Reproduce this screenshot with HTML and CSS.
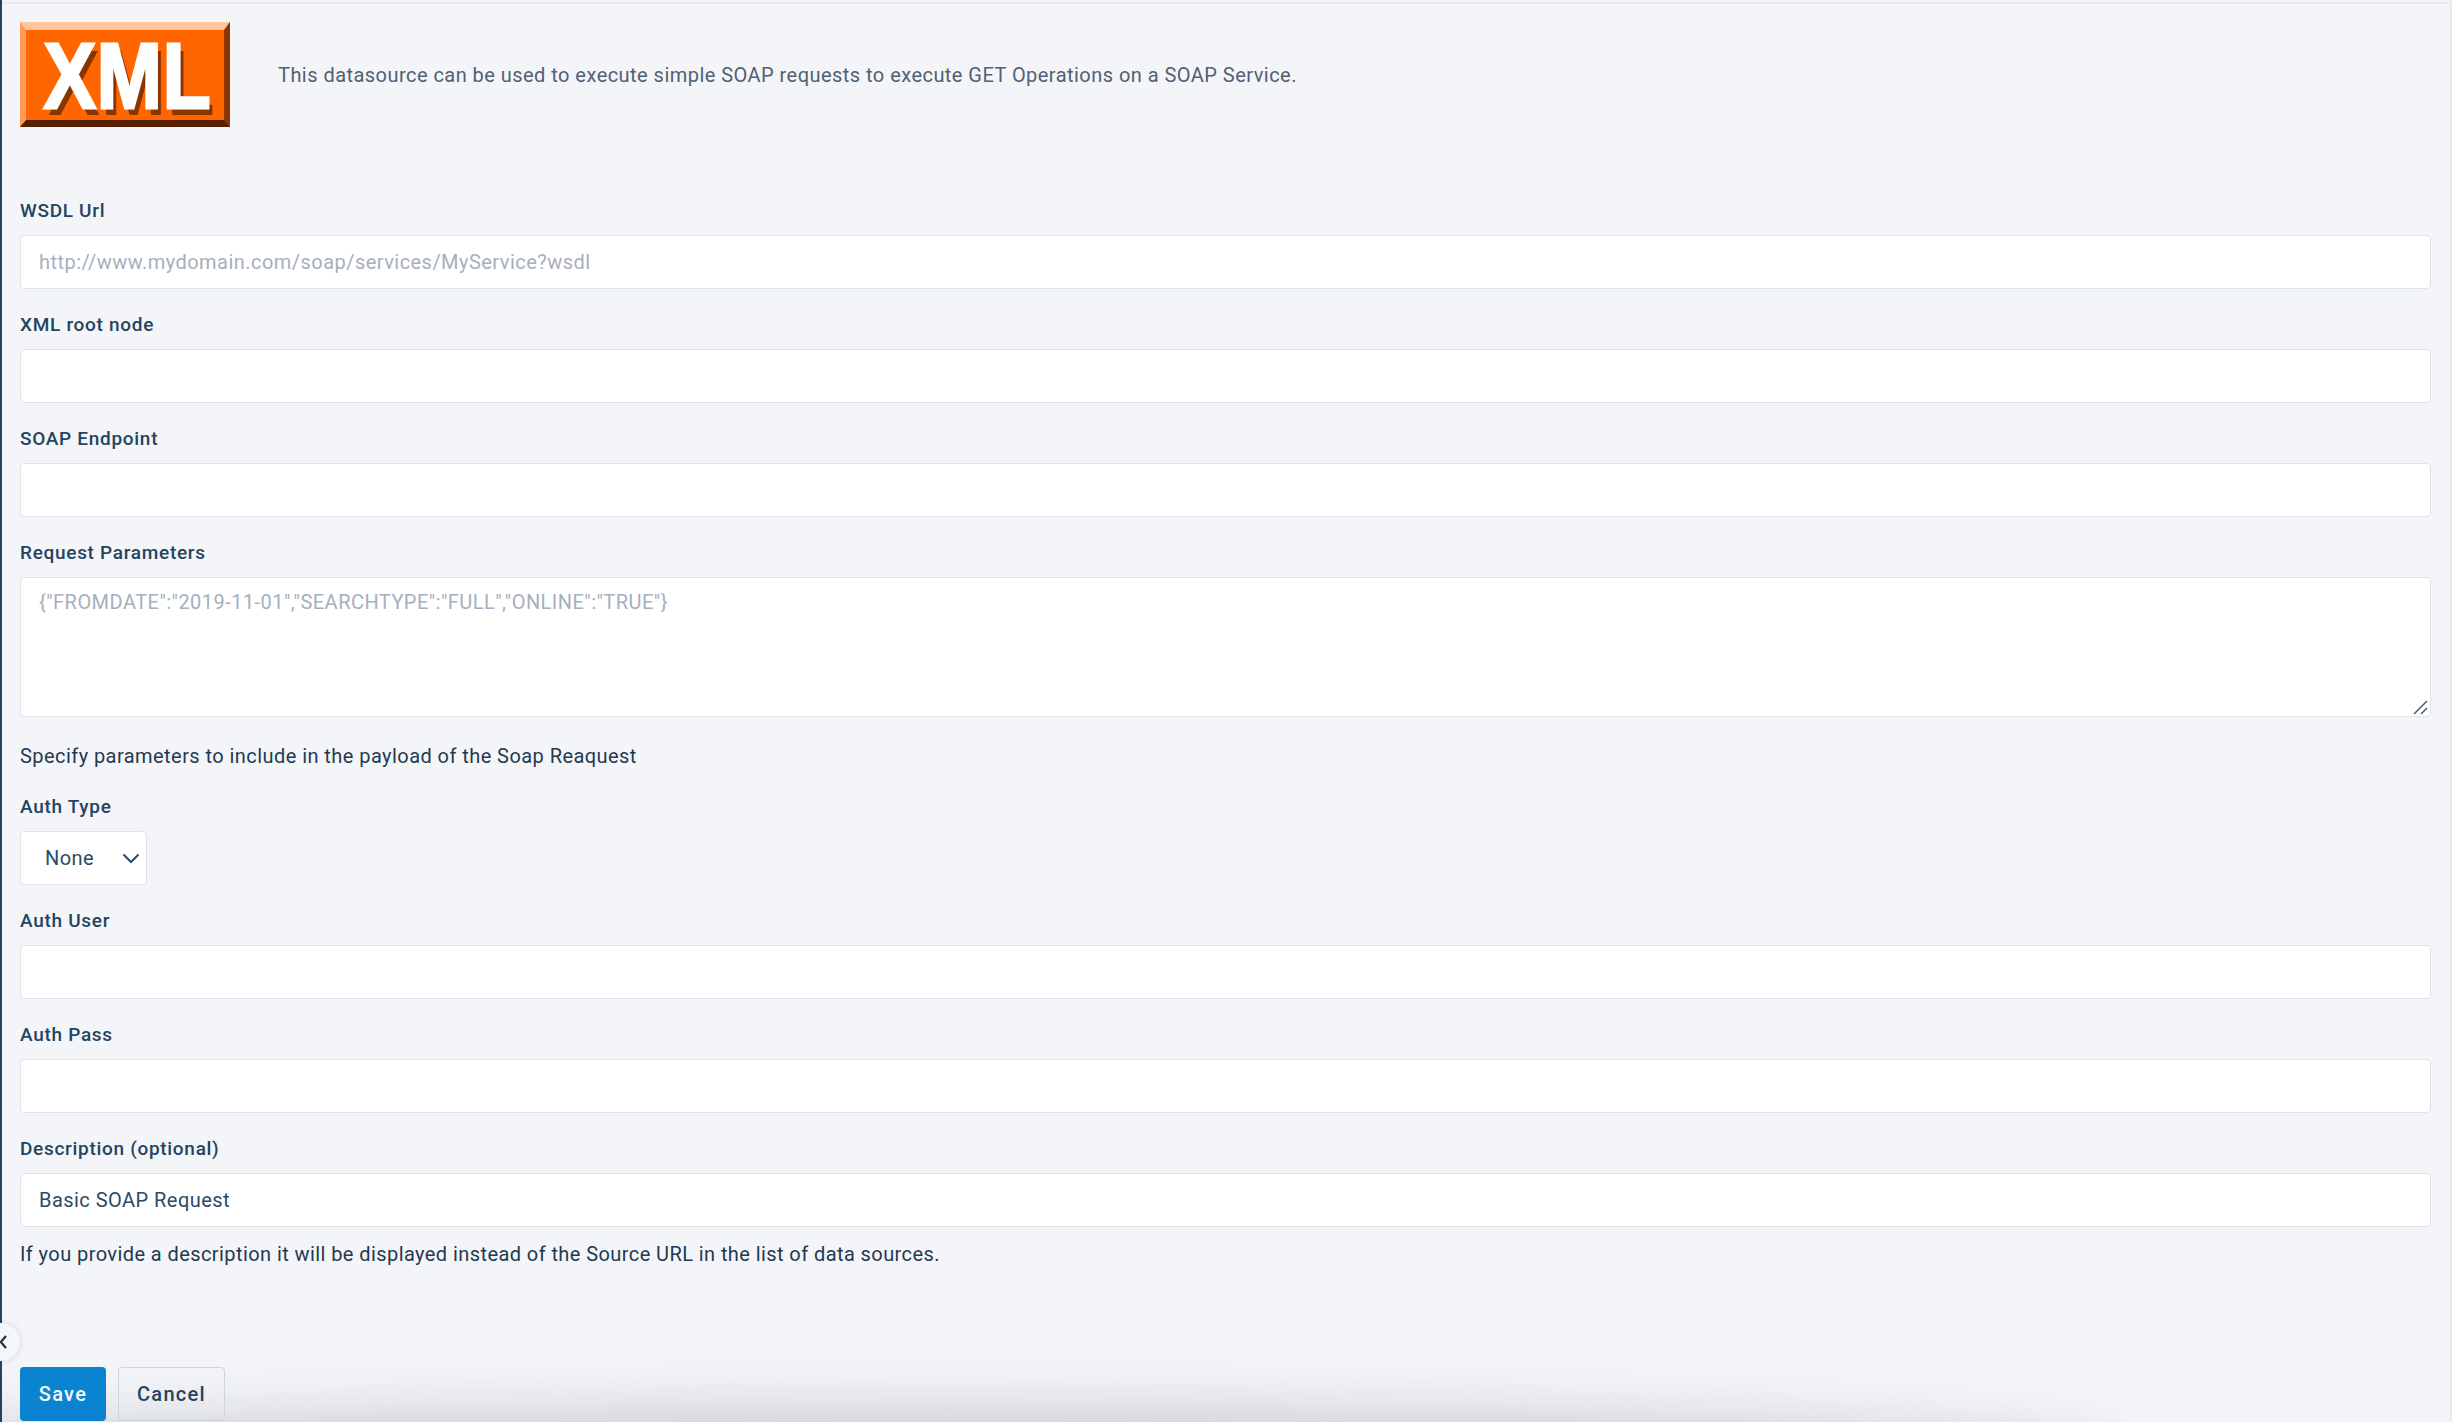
FILE: index.html
```html
<!DOCTYPE html>
<html lang="en">
<head>
<meta charset="utf-8">
<title>SOAP datasource</title>
<link rel="stylesheet" href="styles.css">
</head>
<body>
<div class="page">
  <header class="intro">
    <div class="logo"><span class="logo-text">XML</span></div>
    <p class="intro-text">This datasource can be used to execute simple SOAP requests to execute GET Operations on a SOAP Service.</p>
  </header>
  <form class="form">
    <div class="field">
      <label class="label">WSDL Url</label>
      <input class="input" placeholder="http://www.mydomain.com/soap/services/MyService?wsdl">
    </div>
    <div class="field">
      <label class="label">XML root node</label>
      <input class="input">
    </div>
    <div class="field">
      <label class="label">SOAP Endpoint</label>
      <input class="input">
    </div>
    <div class="field field-params">
      <label class="label">Request Parameters</label>
      <div class="textarea-wrap">
        <textarea class="input textarea" placeholder='{"FROMDATE":"2019-11-01","SEARCHTYPE":"FULL","ONLINE":"TRUE"}'></textarea>
        <svg class="grip" width="15" height="15" viewBox="0 0 15 15"><path d="M1 14 14 1M8 14l6-6" fill="none" stroke="#4f5b6b" stroke-width="1.500"/></svg>
      </div>
      <p class="help">Specify parameters to include in the payload of the Soap Reaquest</p>
    </div>
    <div class="field">
      <label class="label">Auth Type</label>
      <div class="select">
        <span>None</span>
        <svg width="18" height="11" viewBox="0 0 18 11"><path d="M1.500 1.500 9 9l7.500-7.500" fill="none" stroke="#2b4a66" stroke-width="2"/></svg>
      </div>
    </div>
    <div class="field">
      <label class="label">Auth User</label>
      <input class="input">
    </div>
    <div class="field">
      <label class="label">Auth Pass</label>
      <input class="input">
    </div>
    <div class="field field-desc">
      <label class="label">Description (optional)</label>
      <input class="input" value="Basic SOAP Request">
      <p class="help help-tight">If you provide a description it will be displayed instead of the Source URL in the list of data sources.</p>
    </div>
    <div class="actions">
      <button type="button" class="btn btn-primary">Save</button>
      <button type="button" class="btn btn-default">Cancel</button>
    </div>
  </form>
  <div class="footer-shadow"></div>
  <div class="leftline"></div>
  <button type="button" class="collapse" aria-label="Collapse">
    <svg width="7" height="14" viewBox="0 0 7 14"><path d="M6 1 .8 7 6 13" fill="none" stroke="#1f3347" stroke-width="2.200"/></svg>
  </button>
  <div class="topline"></div>
  <div class="rightline"></div>
</div>
</body>
</html>
```
FILE: styles.css
```css
* { box-sizing: border-box; }
html, body { margin: 0; height: 100%; overflow: hidden; }
body { background: #f4f5f9; font-family: Roboto, "Liberation Sans", sans-serif; color: #1f3a52; }
.page { position: relative; height: 1422px; width: 2452px; padding: 0 21px 0 20px; overflow: hidden; }
.leftline { position: absolute; left: 0; top: 0; bottom: 0; width: 2px; background: #1f4464; z-index: 2; }
.topline { position: absolute; left: 2px; top: 2px; right: 0; height: 2px; background: #e8e9ee; }
.rightline { position: absolute; right: 0; top: 0; bottom: 0; width: 2px; background: #e9eaee; }
.intro { display: flex; gap: 48px; padding-top: 22px; height: 196px; align-items: flex-start; }
.logo { flex: none; width: 210px; height: 105px; display: flex; align-items: center; justify-content: center; background: #ff6600; border-style: solid; border-width: 8px 6px 7px; border-color: #ffc59c #8a3400 #552000 #ff9a55; }
.logo-text { display: inline-block; font-family: "Liberation Sans", sans-serif; font-weight: 700; font-size: 92px; line-height: 1; color: #fff; -webkit-text-stroke: 3px #fff; text-shadow: 5px 7px 0 #8a3400; letter-spacing: 1px; margin: 2px 0 0 5px; transform: scaleX(.85); }
.intro-text { margin: 38px 0 0; font-size: 20px; line-height: 30px; color: #4f6172; letter-spacing: 0.46px; }
.form { display: flex; flex-direction: column; }
.field { display: flex; flex-direction: column; height: 114px; flex: none; }
.field-params { height: 254px; }
.field-desc { height: 233px; }
.label { font-size: 19px; font-weight: 500; line-height: 26px; height: 39px; padding-top: 2px; color: #24445f; letter-spacing: 0.7px; }
.input { display: block; width: 100%; height: 54px; border: 1px solid #dfe3ec; border-radius: 4px; background: #fff; padding: 0 18px; font: 20px/30px Roboto, sans-serif; color: #2b4a66; outline: none; letter-spacing: 0.46px; flex: none; }
.input::placeholder { color: #a6b0bd; opacity: 1; }
.textarea-wrap { position: relative; height: 141px; }
.textarea { height: 140px; padding-top: 9px; resize: none; }
.grip { position: absolute; right: 3px; bottom: 3px; }
.help { margin: 25px 0 0; font-size: 20px; line-height: 26px; color: #1f3a52; letter-spacing: 0.44px; }
.help-tight { margin-top: 14px; letter-spacing: 0.42px; }
.select { display: flex; align-items: center; justify-content: space-between; width: 127px; height: 54px; background: #fff; border: 1px solid #dfe3ec; border-radius: 4px; padding: 0 6px 0 24px; font-size: 20px; color: #2b4a66; letter-spacing: 0.46px; }
.actions { display: flex; gap: 12px; position: relative; z-index: 2; }
.btn { height: 54px; border-radius: 4px; font: 500 20px Roboto, sans-serif; letter-spacing: 1.3px; padding: 0; }
.btn-primary { width: 86px; background: #0a84d0; color: #f2f8fc; border: 0; }
.btn-default { width: 107px; background: transparent; color: #24445f; border: 1px solid #cfd5de; }
.footer-shadow { position: absolute; left: -200px; width: 2300px; top: 1432px; height: 100px; border-radius: 50% 50% 0 0 / 30% 30% 0 0; box-shadow: 0 0 60px 20px rgba(120,125,135,.36); background: #d8dade; z-index: 1; }
.collapse { position: absolute; z-index: 3; left: -18px; top: 1323px; width: 38px; height: 38px; padding: 0 0 0 18px; border: 0; border-radius: 50%; background: #f5f6fa; box-shadow: 0 0 6px rgba(60,70,90,.18); display: flex; align-items: center; }
```
